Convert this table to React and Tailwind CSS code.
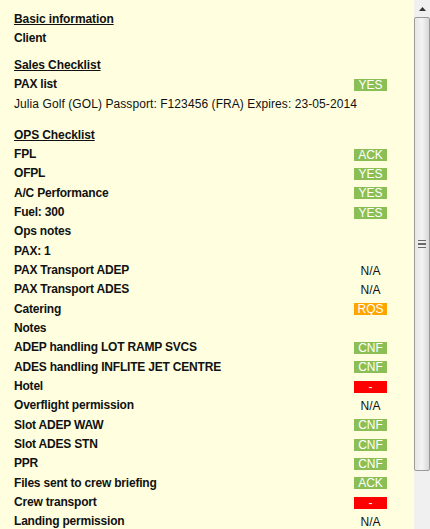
import React from 'react';

const badgeColors = {
  green: 'bg-[#8bbf56] text-white',
  orange: 'bg-[#ffa500] text-white',
  red: 'bg-[#ff0000] text-white',
};

function Badge({ status }) {
  if (!status) return null;
  if (status === 'N/A') {
    return <span className='w-[33px] text-center leading-[12px] font-normal tracking-normal text-[#111]'>N/A</span>;
  }
  let color = badgeColors.green;
  if (status === 'RQS') color = badgeColors.orange;
  if (status === '-') color = badgeColors.red;
  return (
    <span className={`w-[33px] h-[12px] text-center leading-[12px] font-normal tracking-normal ${color}`}>
      {status}
    </span>
  );
}

function Row({ label, status, bold = true }) {
  return (
    <div className='flex items-center h-[19.33px] leading-[19.33px]'>
      <span className={`flex-1 whitespace-nowrap ${bold ? 'font-bold tracking-[-0.2px]' : 'font-normal tracking-[0.08px]'}`}>{label}</span>
      <Badge status={status} />
    </div>
  );
}

function Heading({ children, className }) {
  return (
    <div className={`h-[19.33px] leading-[19.33px] font-bold tracking-[-0.1px] underline underline-offset-[1px] ${className || ''}`}>
      {children}
    </div>
  );
}

const opsRows = [
  ['FPL', 'ACK'],
  ['OFPL', 'YES'],
  ['A/C Performance', 'YES'],
  ['Fuel: 300', 'YES'],
  ['Ops notes'],
  ['PAX: 1'],
  ['PAX Transport ADEP', 'N/A'],
  ['PAX Transport ADES', 'N/A'],
  ['Catering', 'RQS'],
  ['Notes'],
  ['ADEP handling LOT RAMP SVCS', 'CNF'],
  ['ADES handling INFLITE JET CENTRE', 'CNF'],
  ['Hotel', '-'],
  ['Overflight permission', 'N/A'],
  ['Slot ADEP WAW', 'CNF'],
  ['Slot ADES STN', 'CNF'],
  ['PPR', 'CNF'],
  ['Files sent to crew briefing', 'ACK'],
  ['Crew transport', '-'],
  ['Landing permission', 'N/A'],
];

function Scrollbar() {
  return (
    <div className='w-[16px] h-[529px] bg-[#f0f0f0] flex flex-col'>
      <div className='h-[17px] flex items-center justify-center'>
        <svg width='7' height='4' viewBox='0 0 7 4'>
          <path d='M3.5 0 L7 4 L0 4 Z' fill='#333' />
        </svg>
      </div>
      <div className='h-[454px] rounded-[2px] border border-[#9a9a9a] bg-gradient-to-r from-[#e6e6e6] via-[#f4f4f4] to-[#d8d8d8] flex items-center justify-center'>
        <div className='flex flex-col gap-[2px]'>
          <div className='w-[8px] h-[1.5px] bg-[#6a6a6a]' />
          <div className='w-[8px] h-[1.5px] bg-[#6a6a6a]' />
          <div className='w-[8px] h-[1.5px] bg-[#6a6a6a]' />
        </div>
      </div>
    </div>
  );
}

export default function App() {
  return (
    <div className='w-[430px] h-[529px] overflow-hidden flex bg-[#ffffe0] text-[12px] text-[#111] font-["Liberation_Sans",Arial,sans-serif]'>
      <div className='flex-1 pl-[14px] pr-[27px] pt-[9.5px]'>
        <Heading>Basic information</Heading>
        <Row label='Client' />

        <Heading className='mt-[8px]'>Sales Checklist</Heading>
        <Row label='PAX list' status='YES' />
        <Row label='Julia Golf (GOL) Passport: F123456 (FRA) Expires: 23-05-2014' bold={false} />

        <Heading className='mt-[11.5px]'>OPS Checklist</Heading>
        {opsRows.map(([label, status]) => (
          <Row key={label} label={label} status={status} />
        ))}
      </div>
      <Scrollbar />
    </div>
  );
}
